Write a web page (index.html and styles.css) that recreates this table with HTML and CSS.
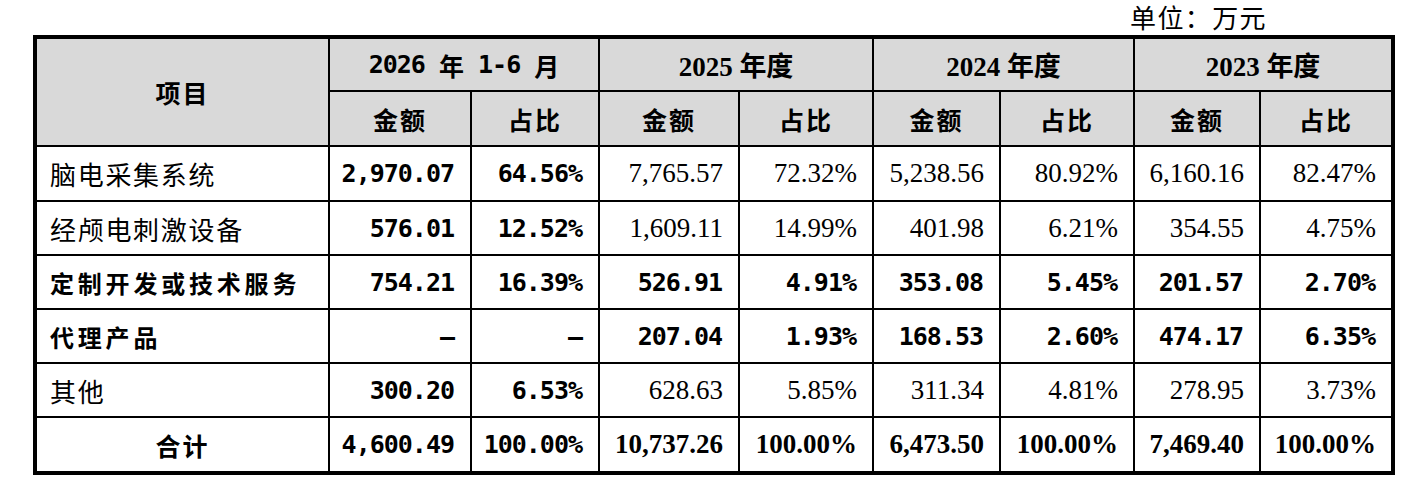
FILE: index.html
```html
<!DOCTYPE html>
<html lang="zh-CN">
<head>
<meta charset="utf-8">
<title>收入构成</title>
<link rel="stylesheet" href="styles.css">
</head>
<body>
<div class="page">
  <div class="unit">单位：万元</div>
  <div class="tbl">
    <div class="c hd span-r2 hk">项目</div>
    <div class="c hd span-c2 hm">2026 <span class="k">年</span> 1-6 <span class="k">月</span></div>
    <div class="c hd span-c2 hs">2025 年度</div>
    <div class="c hd span-c2 hs">2024 年度</div>
    <div class="c hd span-c2 hs">2023 年度</div>
    <div class="c hd hk">金额</div><div class="c hd hk">占比</div>
    <div class="c hd hk">金额</div><div class="c hd hk">占比</div>
    <div class="c hd hk">金额</div><div class="c hd hk">占比</div>
    <div class="c hd hk">金额</div><div class="c hd hk">占比</div>

    <div class="c lbl">脑电采集系统</div>
    <div class="c num mono">2,970.07</div><div class="c num mono">64.56%</div>
    <div class="c num serif">7,765.57</div><div class="c num serif">72.32%</div>
    <div class="c num serif">5,238.56</div><div class="c num serif">80.92%</div>
    <div class="c num serif">6,160.16</div><div class="c num serif">82.47%</div>

    <div class="c lbl">经颅电刺激设备</div>
    <div class="c num mono">576.01</div><div class="c num mono">12.52%</div>
    <div class="c num serif">1,609.11</div><div class="c num serif">14.99%</div>
    <div class="c num serif">401.98</div><div class="c num serif">6.21%</div>
    <div class="c num serif">354.55</div><div class="c num serif">4.75%</div>

    <div class="c lbl lbl-b">定制开发或技术服务</div>
    <div class="c num mono">754.21</div><div class="c num mono">16.39%</div>
    <div class="c num mono">526.91</div><div class="c num mono">4.91%</div>
    <div class="c num mono">353.08</div><div class="c num mono">5.45%</div>
    <div class="c num mono">201.57</div><div class="c num mono">2.70%</div>

    <div class="c lbl lbl-b">代理产品</div>
    <div class="c num mono">–</div><div class="c num mono">–</div>
    <div class="c num mono">207.04</div><div class="c num mono">1.93%</div>
    <div class="c num mono">168.53</div><div class="c num mono">2.60%</div>
    <div class="c num mono">474.17</div><div class="c num mono">6.35%</div>

    <div class="c lbl">其他</div>
    <div class="c num mono">300.20</div><div class="c num mono">6.53%</div>
    <div class="c num serif">628.63</div><div class="c num serif">5.85%</div>
    <div class="c num serif">311.34</div><div class="c num serif">4.81%</div>
    <div class="c num serif">278.95</div><div class="c num serif">3.73%</div>

    <div class="c lbl total">合计</div>
    <div class="c num mono">4,600.49</div><div class="c num mono">100.00%</div>
    <div class="c num serif serif-b">10,737.26</div><div class="c num serif serif-b">100.00%</div>
    <div class="c num serif serif-b">6,473.50</div><div class="c num serif serif-b">100.00%</div>
    <div class="c num serif serif-b">7,469.40</div><div class="c num serif serif-b">100.00%</div>
  </div>
</div>
</body>
</html>
```

FILE: styles.css
```css
html, body {
  margin: 0;
  padding: 0;
  background: #fff;
  color: #000;
}

.page {
  width: 1420px;
  font-family: "Noto Sans CJK SC", sans-serif;
}

.unit {
  width: 1395px;
  box-sizing: border-box;
  height: 35px;
  line-height: 34px;
  text-align: right;
  padding-right: 128px;
  font-size: 26px;
  letter-spacing: 1.4px;
}

.tbl {
  display: grid;
  grid-template-columns: 291px 140px 126px 138px 132px 125px 132px 124px 130px;
  grid-template-rows: 51px 53px 53px 52px 52px 52px 52px 53px;
  gap: 2px;
  background: #000;
  border: 4px solid #000;
  margin-left: 33px;
  width: max-content;
}

.c {
  background: #fff;
  display: flex;
  align-items: center;
  padding: 0 15px 0 13px;
  white-space: nowrap;
  overflow: hidden;
}

.hd {
  background: #d9d9d9;
  justify-content: center;
  font-weight: 700;
  padding: 0;
}

.span-r2 { grid-row: span 2; }
.span-c2 { grid-column: span 2; }

.hk {
  font-family: "Noto Sans CJK SC", sans-serif;
  font-size: 25px;
  letter-spacing: 2px;
}

.hm {
  font-family: "DejaVu Sans Mono", "Noto Sans CJK SC", monospace;
  font-size: 25px;
  letter-spacing: -1px;
  white-space: pre;
}

.hm .k {
  font-family: "Noto Sans CJK SC", sans-serif;
  font-size: 25px;
  letter-spacing: 0;
}

.hs {
  font-family: "Liberation Serif", "Noto Sans CJK SC", serif;
  font-size: 27px;
}

.lbl {
  font-family: "Noto Sans CJK SC", sans-serif;
  font-size: 26px;
  letter-spacing: 1.7px;
}

.lbl-b {
  font-weight: 700;
  font-size: 24px;
  letter-spacing: 3.8px;
}

.total {
  justify-content: center;
  font-weight: 700;
  font-size: 25px;
  letter-spacing: 2px;
  padding: 0;
}

.num {
  justify-content: flex-end;
}

.mono {
  font-family: "DejaVu Sans Mono", monospace;
  font-weight: 700;
  font-size: 25px;
  letter-spacing: -1px;
  padding-right: 16px;
}

.serif {
  font-family: "Liberation Serif", serif;
  font-size: 27px;
}

.serif-b {
  font-weight: 700;
}
```
